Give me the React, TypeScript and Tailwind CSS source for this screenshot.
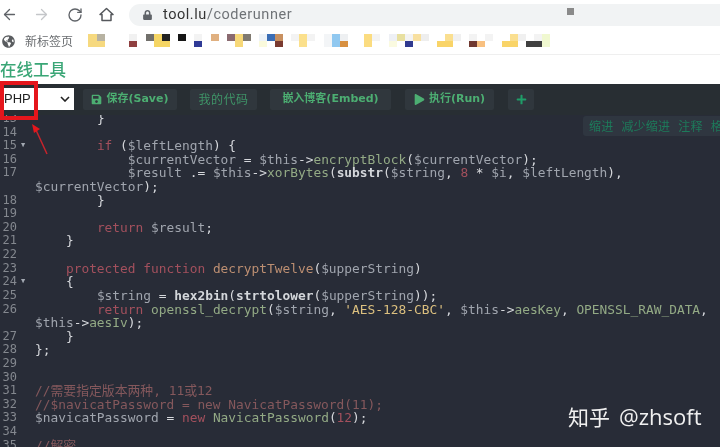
import { ArrowLeft, ArrowRight, RotateCw } from "lucide-react";
import { FaGlobeAmericas, FaSave, FaLock, FaPlay, FaPlus } from "react-icons/fa";

const V = "text-[#a0a5ae]";
const K = "text-[#a3505d]";
const M = "text-[#93aa85]";
const B = "text-[#d3d6da] font-bold";
const P = "text-[#d6d8dc]";
const F = "text-[#bd8f72]";
const S = "text-[#dcc07f]";
const C = "text-[#85585c]";

type Tok = [string, string];
type Line = { n?: number; fold?: boolean; t: Tok[] };

const sp = (n: number): Tok => [" ".repeat(n), P];

const lines: Line[] = [
  { n: 13, t: [sp(8), ["}", P]] },
  { n: 14, t: [] },
  { n: 15, fold: true, t: [sp(8), ["if", K], [" (", P], ["$leftLength", V], [") {", P]] },
  { n: 16, t: [sp(12), ["$currentVector", V], [" = ", P], ["$this", V], ["->", P], ["encryptBlock", M], ["(", P], ["$currentVector", V], [");", P]] },
  { n: 17, t: [sp(12), ["$result", V], [" .= ", P], ["$this", V], ["->", P], ["xorBytes", M], ["(", P], ["substr", B], ["(", P], ["$string", V], [", ", P], ["8", K], [" * ", P], ["$i", V], [", ", P], ["$leftLength", V], ["),", P]] },
  { t: [["$currentVector", V], [");", P]] },
  { n: 18, t: [sp(8), ["}", P]] },
  { n: 19, t: [] },
  { n: 20, t: [sp(8), ["return", K], [" ", P], ["$result", V], [";", P]] },
  { n: 21, t: [sp(4), ["}", P]] },
  { n: 22, t: [] },
  { n: 23, t: [sp(4), ["protected", K], [" ", P], ["function", K], [" ", P], ["decryptTwelve", F], ["(", P], ["$upperString", V], [")", P]] },
  { n: 24, fold: true, t: [sp(4), ["{", P]] },
  { n: 25, t: [sp(8), ["$string", V], [" = ", P], ["hex2bin", B], ["(", P], ["strtolower", B], ["(", P], ["$upperString", V], ["));", P]] },
  { n: 26, t: [sp(8), ["return", K], [" ", P], ["openssl_decrypt", M], ["(", P], ["$string", V], [", ", P], ["'AES-128-CBC'", S], [", ", P], ["$this", V], ["->", P], ["aesKey", M], [", ", P], ["OPENSSL_RAW_DATA", M], [",", P]] },
  { t: [["$this", V], ["->", P], ["aesIv", M], [");", P]] },
  { n: 27, t: [sp(4), ["}", P]] },
  { n: 28, t: [["};", P]] },
  { n: 29, t: [] },
  { n: 30, t: [] },
  { n: 31, t: [["//需要指定版本两种, 11或12", C]] },
  { n: 32, t: [["//$navicatPassword = new NavicatPassword(11);", C]] },
  { n: 33, t: [["$navicatPassword", V], [" = ", P], ["new", K], [" ", P], ["NavicatPassword", M], ["(", P], ["12", K], [");", P]] },
  { n: 34, t: [] },
  { n: 35, t: [["//解密", C]] },
];

const mosaic: [number, number, number, number, string][] = [
  [88, 34, 17, 13, "#f6d97f"], [97, 34, 8, 7, "#b7b2a2"],
  [129, 34, 8, 7, "#f1f1f1"], [129, 41, 8, 6, "#8f3f40"],
  [146, 34, 8, 7, "#716f6b"], [154, 34, 16, 13, "#f5d564"], [162, 34, 8, 7, "#222"],
  [178, 34, 8, 7, "#161616"],
  [194, 34, 8, 7, "#f3f3f3"], [194, 41, 8, 6, "#2f3a96"],
  [211, 34, 8, 7, "#e0b080"],
  [227, 34, 8, 7, "#8a6a70"], [235, 34, 8, 13, "#f7d878"], [243, 34, 8, 7, "#807a70"],
  [259, 34, 8, 7, "#eef3f8"], [259, 41, 8, 6, "#fafadc"], [267, 34, 8, 7, "#3a6db5"], [275, 34, 8, 7, "#c89060"], [275, 41, 8, 6, "#7a3a30"],
  [291, 34, 8, 7, "#f3f3f3"], [299, 34, 8, 13, "#fbe08c"], [307, 34, 8, 7, "#f3f3f3"],
  [324, 34, 8, 13, "#f3f5f7"], [332, 34, 8, 13, "#90c8f0"], [340, 34, 8, 7, "#eef0f2"], [340, 41, 8, 6, "#d89040"],
  [364, 34, 8, 13, "#fbdc80"], [372, 34, 8, 7, "#f3f3f3"],
  [389, 34, 8, 7, "#eef0f5"], [389, 41, 8, 6, "#fafae0"], [397, 34, 8, 7, "#e8e0a0"], [405, 34, 8, 7, "#f3f3f3"], [405, 41, 8, 6, "#303a90"], [413, 34, 8, 7, "#f8e0a0"], [421, 34, 8, 7, "#eeeeee"],
  [437, 41, 16, 6, "#f9d468"], [445, 34, 8, 7, "#fadf90"], [453, 34, 8, 7, "#f0f0f0"],
  [469, 34, 8, 7, "#f3f3f3"], [469, 41, 8, 6, "#703830"], [477, 41, 8, 6, "#f8c080"], [485, 34, 8, 7, "#f3f3f3"],
  [502, 41, 16, 6, "#f9d468"], [510, 34, 8, 7, "#fadf90"], [518, 34, 8, 7, "#f0f0f0"],
  [526, 41, 16, 6, "#404040"], [534, 34, 8, 7, "#f3f3f3"], [542, 34, 8, 13, "#f0f8d0"],
];

const cjk = "font-['Noto_Sans_CJK_SC','Liberation_Sans',sans-serif]";
const btn = "h-[21px] bg-[#30373d] rounded-[2px] flex items-center justify-center text-[11px] font-bold text-[#4cae72] font-['DejaVu_Sans','Noto_Sans_CJK_SC',sans-serif]";

export default function App() {
  return (
    <div className={`relative w-[720px] h-[447px] overflow-hidden bg-white blur-[0.35px] ${cjk}`}>
      {/* browser toolbar */}
      <div className="h-[28px] flex items-center pt-[1px] text-[#5f6368]">
        <ArrowLeft className="ml-[1px] w-[17px] h-[17px]" strokeWidth={1.8} />
        <ArrowRight className="ml-[15px] w-[17px] h-[17px] text-[#c4c6c9]" strokeWidth={1.8} />
        <RotateCw className="ml-[17px] w-[16px] h-[16px]" strokeWidth={2} />
        <svg className="ml-[16px]" width="15" height="15" viewBox="0 0 15 15" fill="none" stroke="#55585c" strokeWidth="1.5" strokeLinejoin="round">
          <path d="M1 7.5L7.5 1.5L14 7.5H12V13.5H3V7.5Z" />
        </svg>
        <div className="ml-[15px] flex-1 h-[22px] bg-[#f1f3f4] rounded-l-[11px] flex items-center pl-[14px]">
          <FaLock className="w-[9px] h-[10px] text-[#5f6368]" />
          <span className="ml-[11px] text-[14.5px] tracking-[0.55px] text-[#333] font-['Roboto',sans-serif]">
            tool.lu<span className="text-[#6f7377]">/coderunner</span>
          </span>
        </div>
      </div>
      {/* bookmarks */}
      <div className="h-[27px] border-b border-[#efefef] flex items-center pl-[2px]">
        <FaGlobeAmericas className="w-[13px] h-[13px] text-[#5a5d60]" />
        <span className="ml-[10px] text-[12px] text-[#6a6d70]">新标签页</span>
      </div>
      {/* title */}
      <div className="h-[29px] flex items-center text-[16.5px] font-medium text-[#3aa676]">在线工具</div>
      {/* toolbar */}
      <div className="relative z-10 h-[31px] bg-[#282e33] flex items-center gap-[13px] pb-[1px]">
        <div className="w-[74px] h-[22px] bg-white flex items-center justify-between pl-[4px] pr-[4px] text-[13px] text-[#222] font-['Liberation_Sans',sans-serif]">
          <span>PHP</span>
          <svg width="10" height="6" viewBox="0 0 10 6" fill="none" stroke="#222" strokeWidth="1.6"><path d="M1 1l4 4 4-4" /></svg>
        </div>
        <div className={`-ml-[4px] w-[94px] gap-[4px] ${btn}`}>
          <FaSave className="w-[11px] h-[11px]" />保存(Save)
        </div>
        <div className="w-[67px] h-[21px] bg-[#30373d] rounded-[2px] flex items-center justify-center text-[12px] tracking-[0.5px] text-[#3f9568]">我的代码</div>
        <div className={`w-[121px] ${btn}`}>嵌入博客(Embed)</div>
        <div className={`ml-[1px] w-[89px] gap-[4px] ${btn}`}>
          <FaPlay className="w-[11px] h-[11px]" />执行(Run)
        </div>
        <div className="ml-[1px] w-[26px] h-[21px] bg-[#30373d] rounded-[2px] flex items-center justify-center text-[#1f9d68]">
          <FaPlus className="w-[11px] h-[11px]" />
        </div>
      </div>
      {/* editor */}
      <div className="h-[332px] bg-[#282c37] overflow-hidden">
        <div className="-mt-[3px] text-[12.85px] leading-[13.62px] font-['DejaVu_Sans_Mono','Noto_Sans_CJK_SC',monospace]">
          {lines.map((l, i) => (
            <div key={i} className="flex h-[13.62px]">
              <div className="w-[35px] shrink-0 flex text-[#84888f] text-[12px]">
                <span className="w-[17px] text-right whitespace-nowrap">{l.n ?? ""}</span>
                {l.fold && <span className="ml-[4px] text-[7px] text-[#a3a9b2]">▼</span>}
              </div>
              <pre className="font-[inherit] whitespace-pre">
                {l.t.map((t, j) => (
                  <span key={j} className={t[1]}>{t[0]}</span>
                ))}
              </pre>
            </div>
          ))}
        </div>
      </div>
      {/* floating editor tools */}
      <div className="absolute left-[583px] top-[116px] w-[140px] h-[20px] bg-[#2f3640] rounded-[3px] flex items-center gap-[8px] pl-[6px] text-[12px] tracking-[0.2px] text-[#1d7a5a] whitespace-nowrap overflow-hidden">
        <span>缩进</span><span>减少缩进</span><span>注释</span><span>格</span>
      </div>
      {/* annotations */}
      <div className="absolute z-20 left-0 top-[81px] w-[38px] h-[39px] border-[4px] border-[#e5161c]" />
      <svg className="absolute z-20 left-[28px] top-[118px]" width="24" height="40" viewBox="0 0 24 40" fill="none">
        <path d="M19 36L8 12" stroke="#c8242c" strokeWidth="1.5" />
        <path d="M4 6l8 5-6 4z" fill="#e5161c" />
      </svg>
      <svg className="absolute left-0 top-0 pointer-events-none" width="720" height="60">
        {mosaic.map((r, i) => (
          <rect key={i} x={r[0]} y={r[1]} width={r[2]} height={r[3]} fill={r[4]} />
        ))}
        <rect x="567" y="8" width="7" height="7" fill="#8a8a8a" />
      </svg>
      {/* watermark */}
      <div className="absolute z-20 left-[568px] top-[402px] flex items-center gap-[10px] text-[#f0f0f0] text-[21px] leading-[28px]">
        <span>知乎</span>
        <span className="font-['Open_Sans',sans-serif] text-[22px] -ml-[1px]">@zhsoft</span>
      </div>
    </div>
  );
}
